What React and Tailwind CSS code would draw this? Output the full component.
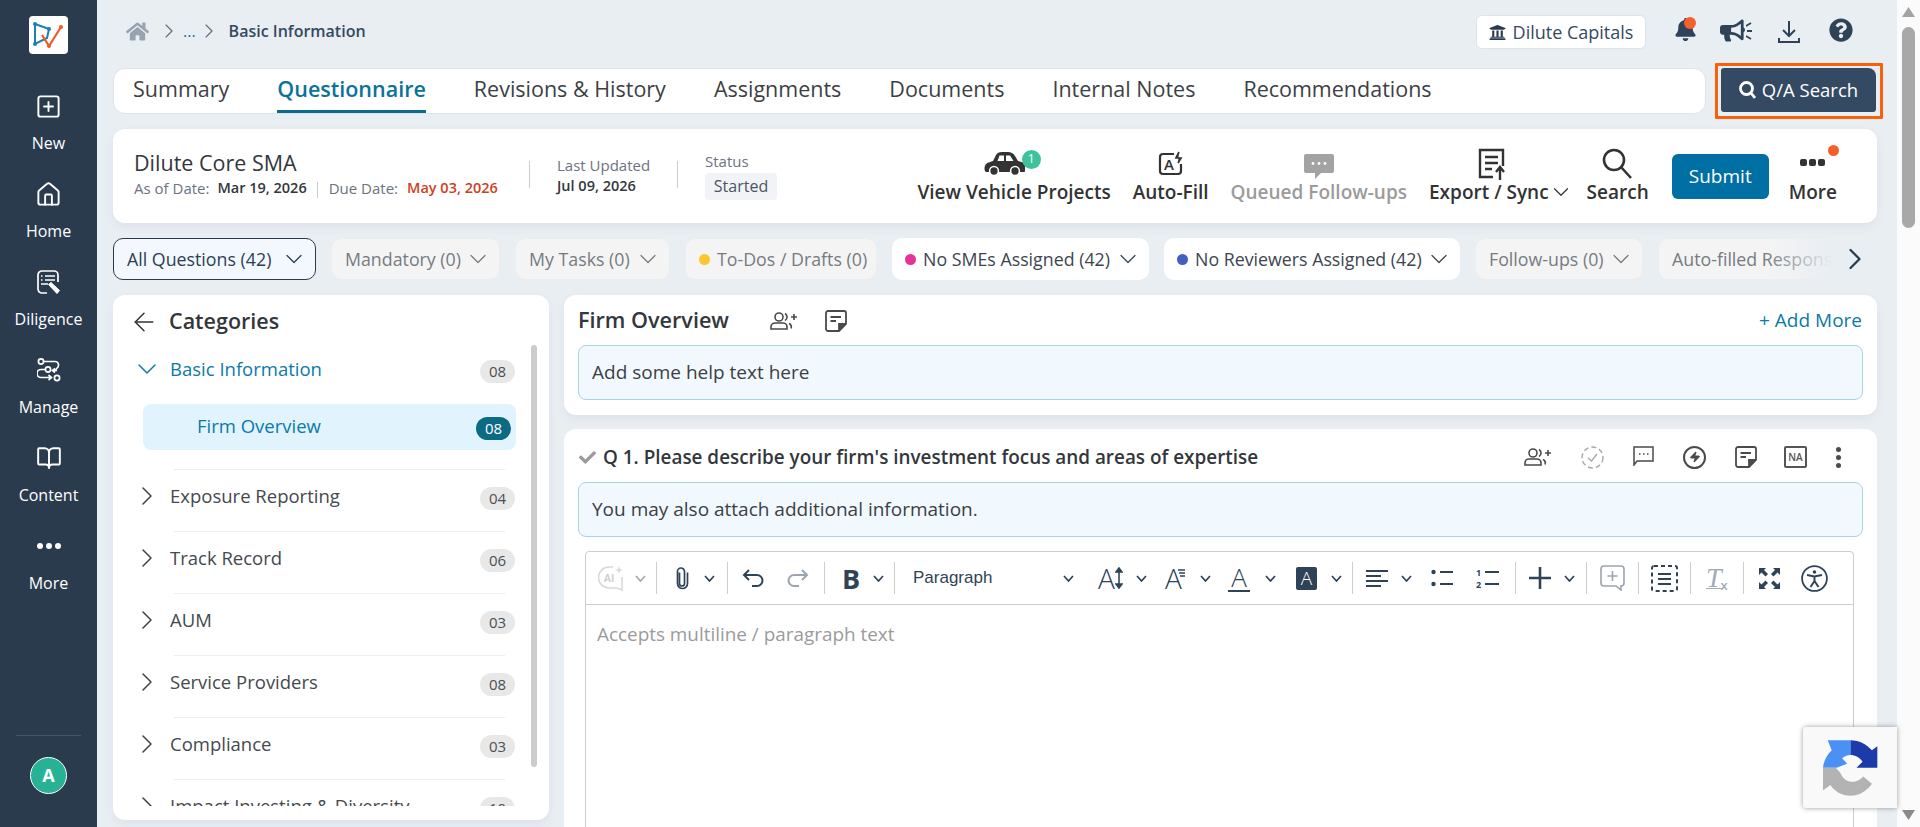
import React from 'react';
import { ChevronDown, ChevronRight, ArrowLeft, BookOpen, Home, SquarePlus, Zap } from 'lucide-react';
import { FaBell, FaBullhorn, FaQuestionCircle, FaUniversity, FaCheck, FaHome } from 'react-icons/fa';

// ------- Sidebar -------
const Logo = () => (
  <div className="w-[39px] h-[38px] rounded-[4px] bg-white flex items-center justify-center">
    <svg width="39" height="38" viewBox="0 0 39 38" fill="none">
      <path d="M6 8 L20 13 L18 22 L6 28 Z" stroke="#1f7fb5" strokeWidth="2" />
      <path d="M13 19 L20 30 L32 11" stroke="#ee5a24" strokeWidth="2.2" />
      <circle cx="6" cy="8" r="2" fill="#1f7fb5" />
      <circle cx="20" cy="13" r="2" fill="#1f7fb5" />
      <circle cx="6" cy="28" r="2" fill="#1f7fb5" />
      <circle cx="32" cy="11" r="2" fill="#ee5a24" />
      <circle cx="20" cy="30" r="2" fill="#ee5a24" />
    </svg>
  </div>
);

const DiligenceIcon = () => (
  <svg width="25" height="25" viewBox="0 0 25 25" fill="none" stroke="white" strokeWidth="1.7">
    <path d="M11 23 H6 a4 4 0 0 1 -4 -4 V5 a4 4 0 0 1 4 -4 H18 a4 4 0 0 1 4 4 V12" />
    <path d="M5 6 H6.5 M9 6 H19 M5 10 H6.5 M9 10 H19 M5 14 H12" />
    <path d="M12.5 14.5 L15 12.5 L23.5 20.5 L21 23.5 Z" fill="white" stroke="white" strokeWidth="1" />
  </svg>
);

const ManageIcon = () => (
  <svg width="24" height="24" viewBox="0 0 24 24" fill="none" stroke="white" strokeWidth="1.7">
    <circle cx="4" cy="3.5" r="2.6" />
    <path d="M7 3.5 H18 a3.5 3.5 0 0 1 3 5.5 L18 12.5" />
    <circle cx="11" cy="11.5" r="2.6" />
    <path d="M20 12.5 H16 M18 10.5 L15.5 12.5 L18 14.5" />
    <path d="M8 11.5 H4 a3.5 3.5 0 0 0 0 8 H14 M11.5 17 L14.5 19.5 L11.5 22" />
    <circle cx="20" cy="20" r="2.6" />
  </svg>
);

const NavItem = ({ icon, label }) => (
  <div className="h-[88px] flex flex-col items-center">
    <div className="h-[28px] flex items-center justify-center">{icon}</div>
    <span className="mt-[13px] text-[16px] leading-[20px] font-medium text-white">{label}</span>
  </div>
);

const Sidebar = () => (
  <div className="w-[97px] shrink-0 h-full bg-[#2a3b4e] flex flex-col items-center">
    <div className="mt-4"><Logo /></div>
    <div className="mt-[38px] w-full">
      <NavItem icon={<SquarePlus size={27} color="white" strokeWidth={1.7} />} label="New" />
      <NavItem icon={<Home size={27} color="white" strokeWidth={1.7} />} label="Home" />
      <NavItem icon={<DiligenceIcon />} label="Diligence" />
      <NavItem icon={<ManageIcon />} label="Manage" />
      <NavItem icon={<BookOpen size={26} color="white" strokeWidth={1.8} />} label="Content" />
      <NavItem
        icon={
          <div className="flex gap-[3px]">
            <div className="w-[6px] h-[6px] rounded-full bg-white" />
            <div className="w-[6px] h-[6px] rounded-full bg-white" />
            <div className="w-[6px] h-[6px] rounded-full bg-white" />
          </div>
        }
        label="More"
      />
    </div>
    <div className="mt-auto w-[65px] h-px bg-[#43566b]" />
    <div className="mt-[21px] mb-[33px] w-[37px] h-[37px] rounded-full bg-[#27b296] border border-white flex items-center justify-center text-white font-bold text-[18px]">
      A
    </div>
  </div>
);

// ------- Tabs -------
const tabs = ['Summary', 'Questionnaire', 'Revisions & History', 'Assignments', 'Documents', 'Internal Notes', 'Recommendations'];

const TabBar = () => (
  <div className="w-[1593px] h-[46px] bg-white rounded-[12px] border border-[#dfe3e8] flex gap-[48px] pl-[19px]">
    {tabs.map((t) => (
      <div
        key={t}
        className={
          t === 'Questionnaire'
            ? 'h-full flex items-center text-[21.5px] font-semibold text-[#0b7299] border-b-[3px] border-[#0b6c8f] pb-[1px]'
            : 'h-full flex items-center text-[21.5px] text-[#3c3f44] pb-[3px]'
        }
      >
        {t}
      </div>
    ))}
  </div>
);

// ------- Info card -------
const CarIcon = () => (
  <svg width="41" height="24" viewBox="0 0 41 24" fill="#333">
    <path d="M2 20 C0 19 0 14 2 12 C4 10 7 10 9 9 L12 3 C13 1 15 0 18 0 H24 C27 0 29 1 31 4 L34 9 C37 10 41 10 41 13 V19 C41 20 40 20 39 20 H2 Z" />
    <path d="M13.5 9 L15.5 3.5 H20 V9 Z M22 3.5 H26 L29.5 9 H22 Z" fill="white" />
    <circle cx="10" cy="19" r="4.4" fill="#333" stroke="white" strokeWidth="1.5" />
    <circle cx="31" cy="19" r="4.4" fill="#333" stroke="white" strokeWidth="1.5" />
  </svg>
);

const AutoFillIcon = () => (
  <svg width="26" height="25" viewBox="0 0 26 25" fill="none" stroke="#333" strokeWidth="2.2">
    <path d="M16 3 H5 a3 3 0 0 0 -3 3 V20 a3 3 0 0 0 3 3 H20 a3 3 0 0 0 3 -3 V13" />
    <path d="M21 1 L18 7 H23 L20 12" strokeWidth="1.7" fill="#333" />
    <text x="6" y="19" fontSize="15" fontWeight="600" fill="#333" stroke="none" fontFamily="Open Sans">A</text>
  </svg>
);

const QueuedIcon = () => (
  <svg width="30" height="25" viewBox="0 0 30 25" fill="#a3a3a3">
    <path d="M2 0 H28 a2 2 0 0 1 2 2 V17 a2 2 0 0 1 -2 2 H17 L11 25 V19 H2 a2 2 0 0 1 -2 -2 V2 a2 2 0 0 1 2 -2 Z" />
    <circle cx="9" cy="9.5" r="1.4" fill="white" /><circle cx="15" cy="9.5" r="1.4" fill="white" /><circle cx="21" cy="9.5" r="1.4" fill="white" />
  </svg>
);

const ExportIcon = () => (
  <svg width="28" height="32" viewBox="0 0 28 32" fill="none" stroke="#333" strokeWidth="2.4">
    <path d="M15 29 H2 V2 H25 V18" />
    <path d="M7 9 H20 M7 15 H20 M7 21 H14" />
    <path d="M22 32 V20 M18 24 L22 19 L26 24" />
  </svg>
);

const SearchBig = () => (
  <svg width="31" height="31" viewBox="0 0 31 31" fill="none" stroke="#333" strokeWidth="2.6">
    <circle cx="12" cy="12" r="10" />
    <path d="M19 19 L29 30" />
  </svg>
);

const Action = ({ icon, label, grey, extra }) => (
  <div className="flex flex-col items-center">
    <div className="h-[32px] flex items-end justify-center">{icon}</div>
    <div className={`-mt-[1px] flex items-center text-[19px] leading-[24px] font-semibold whitespace-nowrap ${grey ? 'text-[#9b9b9b]' : 'text-[#333]'}`}>
      {label}
      {extra}
    </div>
  </div>
);

const InfoCard = () => (
  <div className="mt-[15px] h-[94px] bg-white rounded-[12px] shadow-[0_4px_10px_rgba(60,80,100,0.07)] flex items-center">
    <div className="ml-[21px] w-[395px] mb-[4px]">
      <div className="text-[21.5px] leading-[26px] text-[#33373c]">Dilute Core SMA</div>
      <div className="mt-[2px] flex items-center text-[15px] leading-[20px] whitespace-nowrap">
        <span className="text-[#6b7280]">As of Date:</span>
        <span className="ml-[8px] text-[14.5px] font-semibold text-[#33373c]">Mar 19, 2026</span>
        <span className="ml-[10px] w-px h-[16px] bg-[#c9cdd2] mt-[4px]" />
        <span className="ml-[11px] text-[#6b7280]">Due Date:</span>
        <span className="ml-[9px] text-[14.5px] font-semibold text-[#cf3f1e]">May 03, 2026</span>
      </div>
    </div>
    <div className="w-px h-[27px] bg-[#c9cdd2] mb-[3px]" />
    <div className="ml-[27px] w-[120px] mb-[2px]">
      <div className="text-[15px] leading-[20px] text-[#6b7280]">Last Updated</div>
      <div className="mt-[1px] text-[14.5px] leading-[20px] font-semibold text-[#33373c]">Jul 09, 2026</div>
    </div>
    <div className="w-px h-[27px] bg-[#c9cdd2] mb-[3px]" />
    <div className="ml-[27px] mb-[2px]">
      <div className="text-[15px] leading-[20px] text-[#6b7280]">Status</div>
      <div className="mt-[2px] w-[72px] h-[27px] rounded-[4px] bg-[#f1f3f7] flex items-center justify-center text-[16px] text-[#4b5563]">Started</div>
    </div>
    <div className="ml-auto mr-[40px] flex items-center gap-[22px]">
      <Action
        icon={
          <div className="relative mr-[20px] mb-[5px]">
            <CarIcon />
            <div className="absolute left-[38px] -top-[2px] w-[19px] h-[19px] rounded-full bg-[#3dc29b] text-white text-[12px] flex items-center justify-center">1</div>
          </div>
        }
        label="View Vehicle Projects"
      />
      <Action icon={<div className="mb-[5px]"><AutoFillIcon /></div>} label="Auto-Fill" />
      <Action icon={<div className="mb-[2px]"><QueuedIcon /></div>} label="Queued Follow-ups" grey />
      <Action
        icon={<div className="mr-[10px]"><ExportIcon /></div>}
        label="Export / Sync"
        extra={<ChevronDown size={26} strokeWidth={1.1} className="-ml-[1px] -mr-[9px] shrink-0" />}
      />
      <Action icon={<div className="mb-[2px]"><SearchBig /></div>} label="Search" />
      <div className="ml-[1px] w-[97px] h-[45px] rounded-[6px] bg-[#006fa3] text-white text-[19px] flex items-center justify-center">Submit</div>
      <div className="-ml-[2px]">
        <Action
          icon={
            <div className="flex gap-[2px] mb-[15px] relative">
              <div className="w-[7px] h-[7px] rounded-[2px] bg-[#333]" />
              <div className="w-[7px] h-[7px] rounded-[2px] bg-[#333]" />
              <div className="w-[7px] h-[7px] rounded-[2px] bg-[#333]" />
              <div className="absolute left-[28px] -top-[14px] w-[11px] h-[11px] rounded-full bg-[#f4602a]" />
            </div>
          }
          label="More"
        />
      </div>
    </div>
  </div>
);

// ------- Filters -------
const Chip = ({ label, dot, width, active, muted, noChevron }) => (
  <div
    className={`${width} h-[42px] shrink-0 rounded-[10px] flex items-center pl-[13px] text-[17.8px] whitespace-nowrap ${
      active ? 'bg-[#f2f8fd] border border-[#2a3b4e] text-[#2d3f52] font-medium' : muted ? 'bg-[#f4f4f4] border border-[#ebedef] text-[#767b82]' : 'bg-white text-[#3c4650]'
    }`}
  >
    {dot && <span className={`w-[11px] h-[11px] rounded-full mr-[7px] shrink-0 ${dot}`} />}
    <span>{label}</span>
    {!noChevron && <ChevronDown size={28} strokeWidth={1.1} className="ml-auto mr-[7px] shrink-0" />}
  </div>
);

const Filters = () => (
  <div className="mt-[15px] flex gap-[15px]">
    <Chip width="w-[203px]" label="All Questions (42)" active />
    <Chip width="w-[169px]" label="Mandatory (0)" muted />
    <Chip width="w-[155px]" label="My Tasks (0)" muted />
    <Chip width="w-[192px]" label="To-Dos / Drafts (0)" dot="bg-[#fcc72e]" muted noChevron />
    <Chip width="w-[257px]" label="No SMEs Assigned (42)" dot="bg-[#e6339c]" />
    <Chip width="w-[296px]" label="No Reviewers Assigned (42)" dot="bg-[#4160c0]" />
    <Chip width="w-[168px]" label="Follow-ups (0)" muted />
    <div className="relative flex-1 h-[42px] rounded-[10px] bg-[#f4f4f4] border border-[#ebedef] overflow-hidden flex items-center pl-[13px] text-[17.8px] text-[#767b82] whitespace-nowrap">
      <span>Auto-filled Responses</span>
      <div className="absolute right-0 top-0 h-full w-[110px] bg-gradient-to-r from-transparent to-[#e9eef3] to-60%" />
      <ChevronRight size={36} strokeWidth={1.5} color="#2a3b4e" className="absolute right-[3px] top-[2px]" />
    </div>
  </div>
);

// ------- Categories -------
const Count = ({ n, className }) => (
  <span className={`w-[35px] h-[23px] rounded-full bg-[#e8e8e8] text-[#4b4f55] text-[15px] flex items-center justify-center ${className}`}>{n}</span>
);

const Category = ({ label, n }) => (
  <>
    <div className="h-[61px] flex items-center pl-[26px] pr-[34px]">
      <ChevronRight size={32} strokeWidth={1.1} color="#3c3f44" className="mb-[10px] -ml-[8px] shrink-0" />
      <span className="ml-[7px] text-[18.5px] text-[#45494e] mb-[10px] whitespace-nowrap">{label}</span>
      <Count n={n} className="ml-auto mb-[4px]" />
    </div>
    <div className="h-px ml-[61px] mr-[44px] bg-[#eceef0]" />
  </>
);

const Categories = () => (
  <div className="relative w-[436px] shrink-0 h-[525px] bg-white rounded-[12px] shadow-[0_4px_10px_rgba(60,80,100,0.07)] overflow-hidden">
    <div className="h-[53px] flex items-center pl-[16px]">
      <ArrowLeft size={30} strokeWidth={1.2} color="#333" />
      <span className="ml-[10px] text-[21.5px] font-semibold text-[#33373c]">Categories</span>
    </div>
    <div className="h-[458px] overflow-hidden">
      <div className="h-[42px] flex items-center pl-[26px] pr-[34px]">
        <ChevronDown size={32} strokeWidth={1.1} color="#0b7aa8" className="-ml-[8px] shrink-0" />
        <span className="ml-[7px] text-[18.5px] text-[#0b7aa8]">Basic Information</span>
        <Count n="08" className="ml-auto mt-[5px]" />
      </div>
      <div className="mt-[14px] ml-[30px] mr-[33px] h-[46px] rounded-[8px] bg-[#e1f3fd] flex items-center pl-[54px] pr-[5px]">
        <span className="text-[18.5px] text-[#0b7aa8] mb-[2px]">Firm Overview</span>
        <span className="ml-auto mt-[2px] w-[35px] h-[23px] rounded-full bg-[#0d6a85] text-white text-[15px] flex items-center justify-center">08</span>
      </div>
      <div className="mt-[19px] h-px ml-[61px] mr-[44px] bg-[#eceef0]" />
      <Category label="Exposure Reporting" n="04" />
      <Category label="Track Record" n="06" />
      <Category label="AUM" n="03" />
      <Category label="Service Providers" n="08" />
      <Category label="Compliance" n="03" />
      <Category label="Impact Investing & Diversity" n="10" />
    </div>
    <div className="absolute left-[418px] top-[50px] w-[6px] h-[422px] rounded-full bg-[#cccccc]" />
  </div>
);

// ------- Toolbar -------
const ink = '#2f4358';

const Sep = ({ className }) => <div className={`w-px h-[32px] bg-[#cdcdcd] shrink-0 ${className}`} />;
const Chev = ({ className, faded }) => (
  <svg width="11" height="7" viewBox="0 0 11 7" fill="none" stroke={faded ? '#a8a8a8' : ink} strokeWidth="1.7" className={`shrink-0 ${className}`}>
    <path d="M1 1 L5.5 6 L10 1" />
  </svg>
);

const Toolbar = () => (
  <div className="h-[53px] border-b border-[#cdcdcd] flex items-center">
    <svg width="26" height="26" viewBox="0 0 26 26" fill="none" stroke="#d9d9d9" strokeWidth="1.6" className="ml-[12px] shrink-0">
      <path d="M15 2 H11 a10 10 0 0 0 0 21 H19 L24 25 V12" />
      <path d="M21 1 L22 4 L25 5 L22 6 L21 9 L20 6 L17 5 L20 4 Z" fill="#d9d9d9" stroke="none" />
      <text x="6" y="17" fontSize="10" fontWeight="700" fill="#d0d0d0" stroke="none" fontFamily="Open Sans">AI</text>
    </svg>
    <Chev faded className="ml-[11px]" />
    <Sep className="ml-[10px]" />
    <svg width="15" height="23" viewBox="0 0 15 23" fill="none" stroke={ink} strokeWidth="1.7" className="ml-[18px] shrink-0">
      <path d="M5 5 V16 a2.5 2.5 0 0 0 5 0 V4 a3.5 3.5 0 0 0 -7 0 V16 a5 5 0 0 0 10 0 V5" transform="translate(-0.5 0.5)" />
    </svg>
    <Chev className="ml-[14px]" />
    <Sep className="ml-[12px]" />
    <svg width="22" height="18" viewBox="0 0 22 18" fill="none" stroke={ink} strokeWidth="2" className="ml-[14px] shrink-0">
      <path d="M7 1 L2 6 L7 11 M2 6 H15 a5.5 5.5 0 0 1 0 11 H10" />
    </svg>
    <svg width="22" height="18" viewBox="0 0 22 18" fill="none" stroke="#9aa5b1" strokeWidth="2" className="ml-[23px] shrink-0">
      <path d="M15 1 L20 6 L15 11 M20 6 H7 a5.5 5.5 0 0 0 0 11 H12" />
    </svg>
    <Sep className="ml-[15px]" />
    <span className="ml-[17px] w-[17px] text-[27px] leading-none font-bold text-[#2f4358]">B</span>
    <Chev className="ml-[14px]" />
    <Sep className="ml-[10px]" />
    <span className="ml-[18px] w-[81px] text-[17px] text-[#2f4358] font-['Liberation_Sans',sans-serif] whitespace-nowrap">Paragraph</span>
    <Chev className="ml-[69px]" />
    <span className="ml-[24px] w-[27px] flex items-center text-[28px] leading-none text-[#2f4358] font-light">
      A<svg width="8" height="22" viewBox="0 0 8 22" stroke={ink} strokeWidth="1.6" fill={ink}><path d="M4 2 V20" /><path d="M1 5 L4 1 L7 5 Z M1 17 L4 21 L7 17 Z" /></svg>
    </span>
    <Chev className="ml-[11px]" />
    <span className="ml-[18px] w-[22px] flex items-start text-[28px] leading-none text-[#2f4358] font-light">
      A<svg width="8" height="12" viewBox="0 0 8 12" stroke={ink} strokeWidth="1.4" className="-ml-[5px] mt-[4px]"><path d="M1 2 H8 M2 5 H8 M3 8 H8" /></svg>
    </span>
    <Chev className="ml-[13px]" />
    <span className="ml-[17px] w-[22px] h-[27px] text-center text-[26px] leading-[25px] text-[#2f4358] font-light border-b-2 border-[#2f4358]">A</span>
    <Chev className="ml-[15px]" />
    <span className="ml-[20px] w-[21px] h-[23px] rounded-[2px] bg-[#2f4358] text-white text-[19px] font-light leading-[23px] text-center">A</span>
    <Chev className="ml-[14px]" />
    <Sep className="ml-[10px]" />
    <svg width="22" height="19" viewBox="0 0 22 19" stroke={ink} strokeWidth="2" className="ml-[13px] shrink-0">
      <path d="M0 2 H22 M0 7 H15 M0 12 H22 M0 17 H15" />
    </svg>
    <Chev className="ml-[13px]" />
    <svg width="22" height="18" viewBox="0 0 22 18" fill={ink} className="ml-[19px] shrink-0">
      <circle cx="2.5" cy="3" r="2.2" /><circle cx="2.5" cy="15" r="2.2" />
      <rect x="9" y="2" width="13" height="2" /><rect x="9" y="14" width="13" height="2" />
    </svg>
    <svg width="23" height="20" viewBox="0 0 23 20" fill={ink} className="ml-[23px] shrink-0">
      <text x="0" y="8" fontSize="9" fontWeight="700" fontFamily="Open Sans">1</text>
      <text x="0" y="20" fontSize="9" fontWeight="700" fontFamily="Open Sans">2</text>
      <rect x="9" y="3" width="14" height="2" /><rect x="9" y="15" width="14" height="2" />
    </svg>
    <Sep className="ml-[16px]" />
    <svg width="22" height="22" viewBox="0 0 22 22" stroke={ink} strokeWidth="2.6" className="ml-[13px] shrink-0">
      <path d="M11 0 V22 M0 11 H22" />
    </svg>
    <Chev className="ml-[13px]" />
    <Sep className="ml-[11px]" />
    <svg width="25" height="26" viewBox="0 0 25 26" fill="none" stroke="#9aa5b1" strokeWidth="1.6" className="ml-[13px] shrink-0">
      <path d="M4 1 H21 a3 3 0 0 1 3 3 V18 a3 3 0 0 1 -3 3 V25 L16 21 H4 a3 3 0 0 1 -3 -3 V4 a3 3 0 0 1 3 -3 Z" />
      <path d="M12.5 6 V16 M7.5 11 H17.5" />
    </svg>
    <Sep className="ml-[13px]" />
    <svg width="27" height="27" viewBox="0 0 27 27" fill="none" stroke={ink} strokeWidth="2" className="ml-[12px] shrink-0">
      <rect x="1" y="1" width="25" height="25" rx="2" strokeDasharray="4 3" />
      <path d="M7 9 H20 M7 14 H20 M7 19 H20" />
    </svg>
    <Sep className="ml-[12px]" />
    <span className="ml-[15px] w-[22px] flex items-end text-[#a3acb6] border-b border-transparent">
      <span className="text-[28px] leading-none italic font-['Liberation_Serif',serif] underline decoration-1">T</span>
      <span className="text-[13px] leading-none font-semibold -ml-[1px]">x</span>
    </span>
    <Sep className="ml-[15px]" />
    <svg width="21" height="21" viewBox="0 0 21 21" fill={ink} className="ml-[15px] shrink-0">
      <path d="M0 0 H7 L5 2 L9 6 L6.5 8.5 L2.5 4.5 L0 7 Z" />
      <path d="M21 0 V7 L18.5 4.5 L14.5 8.5 L12 6 L16 2 L14 0 Z" />
      <path d="M0 21 V14 L2.5 16.5 L6.5 12.5 L9 15 L5 19 L7 21 Z" />
      <path d="M21 21 H14 L16 19 L12 15 L14.5 12.5 L18.5 16.5 L21 14 Z" />
    </svg>
    <svg width="27" height="27" viewBox="0 0 27 27" fill="none" stroke={ink} strokeWidth="1.8" className="ml-[21px] shrink-0">
      <circle cx="13.5" cy="13.5" r="12.4" />
      <circle cx="13.5" cy="7" r="1.8" fill={ink} stroke="none" />
      <path d="M6 10 L13.5 11.5 L21 10 M13.5 11.5 V16 M13.5 16 L9.5 22 M13.5 16 L17.5 22" strokeWidth="2" />
    </svg>
  </div>
);

// ------- Right column -------
const NoteIcon = () => (
  <svg width="22" height="22" viewBox="0 0 22 22" fill="none" stroke="#4a4a4a" strokeWidth="1.8" className="shrink-0">
    <path d="M14 21 H3 a2 2 0 0 1 -2 -2 V3 a2 2 0 0 1 2 -2 H19 a2 2 0 0 1 2 2 V14 Z" />
    <path d="M5.5 7 H16 M5.5 11 H11" />
    <path d="M14 21 V14 H21" fill="#4a4a4a" />
  </svg>
);

const AssignIcon = () => (
  <svg width="28" height="18" viewBox="0 0 28 18" fill="none" stroke="#4a4a4a" strokeWidth="1.6" className="shrink-0">
    <circle cx="9" cy="5" r="4" />
    <path d="M1 17 V15 a4 4 0 0 1 4 -4 H13 a4 4 0 0 1 4 4 V17 Z" />
    <path d="M15 1.5 a4 4 0 0 1 0 7 M19 11.5 a4 4 0 0 1 2 5" />
    <path d="M24 2 V8 M21 5 H27" />
  </svg>
);

const HelpBox = ({ children }) => (
  <div className="h-[55px] shrink-0 rounded-[8px] bg-[#f1f8fe] border border-[#a8d4ea] flex items-center pl-[13px] text-[19px] text-[#3c3f44]">{children}</div>
);

const FirmCard = () => (
  <div className="h-[120px] shrink-0 bg-white rounded-[12px] px-[14px] shadow-[0_4px_10px_rgba(60,80,100,0.07)]">
    <div className="h-[50px] flex items-center">
      <span className="text-[21.6px] font-semibold text-[#33373c]">Firm Overview</span>
      <span className="ml-[41px] mt-[1px]"><AssignIcon /></span>
      <span className="ml-[27px] mt-[1px]"><NoteIcon /></span>
      <span className="ml-auto mr-[1px] text-[19px] text-[#0b7aa8]">+ Add More</span>
    </div>
    <HelpBox>Add some help text here</HelpBox>
  </div>
);

const QuestionCard = () => (
  <div className="mt-[14px] flex-1 min-h-0 overflow-hidden bg-white rounded-t-[12px] px-[14px]">
    <div className="h-[53px] pt-[3px] flex items-center">
      <FaCheck size={17} color="#9b9b9b" className="ml-[1px]" />
      <span className="ml-[7px] text-[18.9px] font-semibold text-[#33373c] whitespace-nowrap">Q 1. Please describe your firm's investment focus and areas of expertise</span>
      <div className="ml-auto flex items-center">
        <AssignIcon />
        <svg width="23" height="23" viewBox="0 0 23 23" fill="none" stroke="#a8a8a8" strokeWidth="1.4" className="ml-[29px]">
          <circle cx="11.5" cy="11.5" r="10.5" strokeDasharray="5 3" />
          <path d="M7 12 L10.5 15 L16 8" />
        </svg>
        <svg width="21" height="20" viewBox="0 0 21 20" fill="none" stroke="#4a4a4a" strokeWidth="1.5" className="ml-[29px] mb-[3px]">
          <path d="M1 1 H20 V15 H4 L1 19 Z" />
          <path d="M6 8 H7.5 M10 8 H11.5 M14 8 H15.5" />
        </svg>
        <div className="ml-[29px] w-[23px] h-[23px] rounded-full border-2 border-[#4a4a4a] flex items-center justify-center">
          <Zap size={12} color="#4a4a4a" fill="#4a4a4a" />
        </div>
        <span className="ml-[29px]"><NoteIcon /></span>
        <span className="ml-[27px] w-[23px] h-[22px] border-2 border-[#555] rounded-[2px] text-[10px] font-semibold leading-[18px] text-center text-[#555]">NA</span>
        <div className="ml-[29px] mr-[22px] flex flex-col gap-[3px]">
          <div className="w-[5px] h-[5px] rounded-full bg-[#4a4a4a]" />
          <div className="w-[5px] h-[5px] rounded-full bg-[#4a4a4a]" />
          <div className="w-[5px] h-[5px] rounded-full bg-[#4a4a4a]" />
        </div>
      </div>
    </div>
    <HelpBox>You may also attach additional information.</HelpBox>
    <div className="mt-[14px] ml-[7px] mr-[9px] h-[400px] border border-[#cdcdcd] rounded-t-[4px]">
      <Toolbar />
      <div className="pt-[17px] pl-[11px] text-[18.9px] leading-[24px] text-[#9b9b9b]">Accepts multiline / paragraph text</div>
    </div>
  </div>
);

// ------- Page chrome -------
const TopBar = () => (
  <div className="h-[68px] flex items-start">
    <div className="mt-[20px] flex items-center h-[22px]">
      <FaHome size={23} color="#97a3af" className="ml-[13px]" />
      <ChevronRight size={24} strokeWidth={1.1} color="#5d6b7a" className="ml-[8px]" />
      <span className="ml-[2px] text-[16px] font-medium text-[#0b7aa8]">...</span>
      <ChevronRight size={24} strokeWidth={1.1} color="#5d6b7a" className="ml-[1px]" />
      <span className="ml-[8px] text-[16px] font-semibold text-[#344a5f]">Basic Information</span>
    </div>
    <div className="ml-auto mt-[15px] flex items-start">
      <div className="w-[170px] h-[34px] rounded-[6px] bg-white border border-[#dfe3e8] flex items-center justify-center text-[18px] text-[#344a5f]">
        <FaUniversity size={17} color="#2a3b4e" className="mr-[7px]" />
        Dilute Capitals
      </div>
      <div className="relative ml-[28px] mt-[3px] w-[22px] h-[24px]">
        <FaBell size={23} color="#2f4358" />
        <div className="absolute left-[10px] -top-[1px] w-[12px] h-[12px] rounded-full bg-[#f4602a]" />
      </div>
      <div className="ml-[24px] mt-[4px] w-[32px] h-[23px] flex items-center">
        <FaBullhorn size={25} color="#2f4358" className="shrink-0" />
        <svg width="6" height="18" viewBox="0 0 6 18" stroke="#2f4358" strokeWidth="1.8" className="ml-[1px] shrink-0">
          <path d="M0 4 L5 1 M1 9 H6 M0 14 L5 17" />
        </svg>
      </div>
      <svg width="22" height="24" viewBox="0 0 22 24" fill="none" stroke="#2f4358" strokeWidth="2" className="ml-[26px] mt-[5px]">
        <path d="M11 1 V15 M5 10 L11 16 L17 10 M1 18 V22 H21 V18" />
      </svg>
      <FaQuestionCircle size={24} color="#2f4358" className="ml-[29px] mt-[3px] mr-[24px]" />
    </div>
  </div>
);

const ScrollBar = () => (
  <div className="w-[23px] shrink-0 h-full bg-[#fbfbfb] flex flex-col items-center">
    <svg width="13" height="10" viewBox="0 0 13 10" fill="#a3a3a3" className="mt-[7px]"><path d="M6.5 0 L13 10 H0 Z" /></svg>
    <div className="mt-[10px] w-[13px] h-[201px] rounded-full bg-[#a8a8a8]" />
    <svg width="13" height="10" viewBox="0 0 13 10" fill="#8a8a8a" className="mt-auto mb-[7px]"><path d="M0 0 H13 L6.5 10 Z" /></svg>
  </div>
);

const Recaptcha = () => (
  <div className="absolute right-[23px] top-[727px] w-[94px] h-[81px] bg-[#f9f9f9] rounded-l-[3px] shadow-[0_0_5px_rgba(90,90,90,0.6)] flex items-center pl-[20px]">
    <svg width="55" height="56" viewBox="0 0 164 166">
      <path d="M0 82 C2 62 12 44 26 30 L14 0 L82 0 L82 44 C72 44 63 48 57 54 L72 70 L40 82 Z" fill="#4a90f5" />
      <path d="M82 0 C108 0 130 12 146 30 L162 18 L162 82 L100 82 L118 64 C110 52 96 44 82 44 Z" fill="#1c3aa9" />
      <path d="M0 82 L38 82 L52 98 C58 112 68 122 82 124 C100 126 112 116 120 108 L146 130 C130 152 108 166 82 166 C56 166 36 154 22 134 L0 150 Z" fill="#b3b3b3" />
    </svg>
  </div>
);

export default function App() {
  return (
    <div className="relative flex w-full h-[827px] overflow-hidden bg-[#e9eef3] font-['Open_Sans',sans-serif]">
      <Sidebar />
      <div className="flex-1 min-w-0 pl-4 pr-5">
        <TopBar />
        <div className="flex">
          <TabBar />
          <div className="relative ml-[15px] w-[155px] h-[44px] rounded-[3px] rounded-tr-[8px] bg-[#344a63] flex items-center justify-center text-white text-[18.5px] font-medium">
            <svg width="17" height="18" viewBox="0 0 17 18" fill="none" stroke="white" strokeWidth="2.8" className="mr-[6px]">
              <circle cx="7.5" cy="7.5" r="6" /><path d="M12 12 L16 17" />
            </svg>
            Q/A Search
            <div className="absolute -left-[6px] -right-[7px] -top-[5px] -bottom-[7px] border-[3px] border-[#fa5f0a] rounded-[1px]" />
          </div>
        </div>
        <InfoCard />
        <Filters />
        <div className="mt-[15px] flex gap-[15px] h-[533px]">
          <Categories />
          <div className="flex-1 min-w-0 flex flex-col">
            <FirmCard />
            <QuestionCard />
          </div>
        </div>
      </div>
      <ScrollBar />
      <Recaptcha />
    </div>
  );
}
